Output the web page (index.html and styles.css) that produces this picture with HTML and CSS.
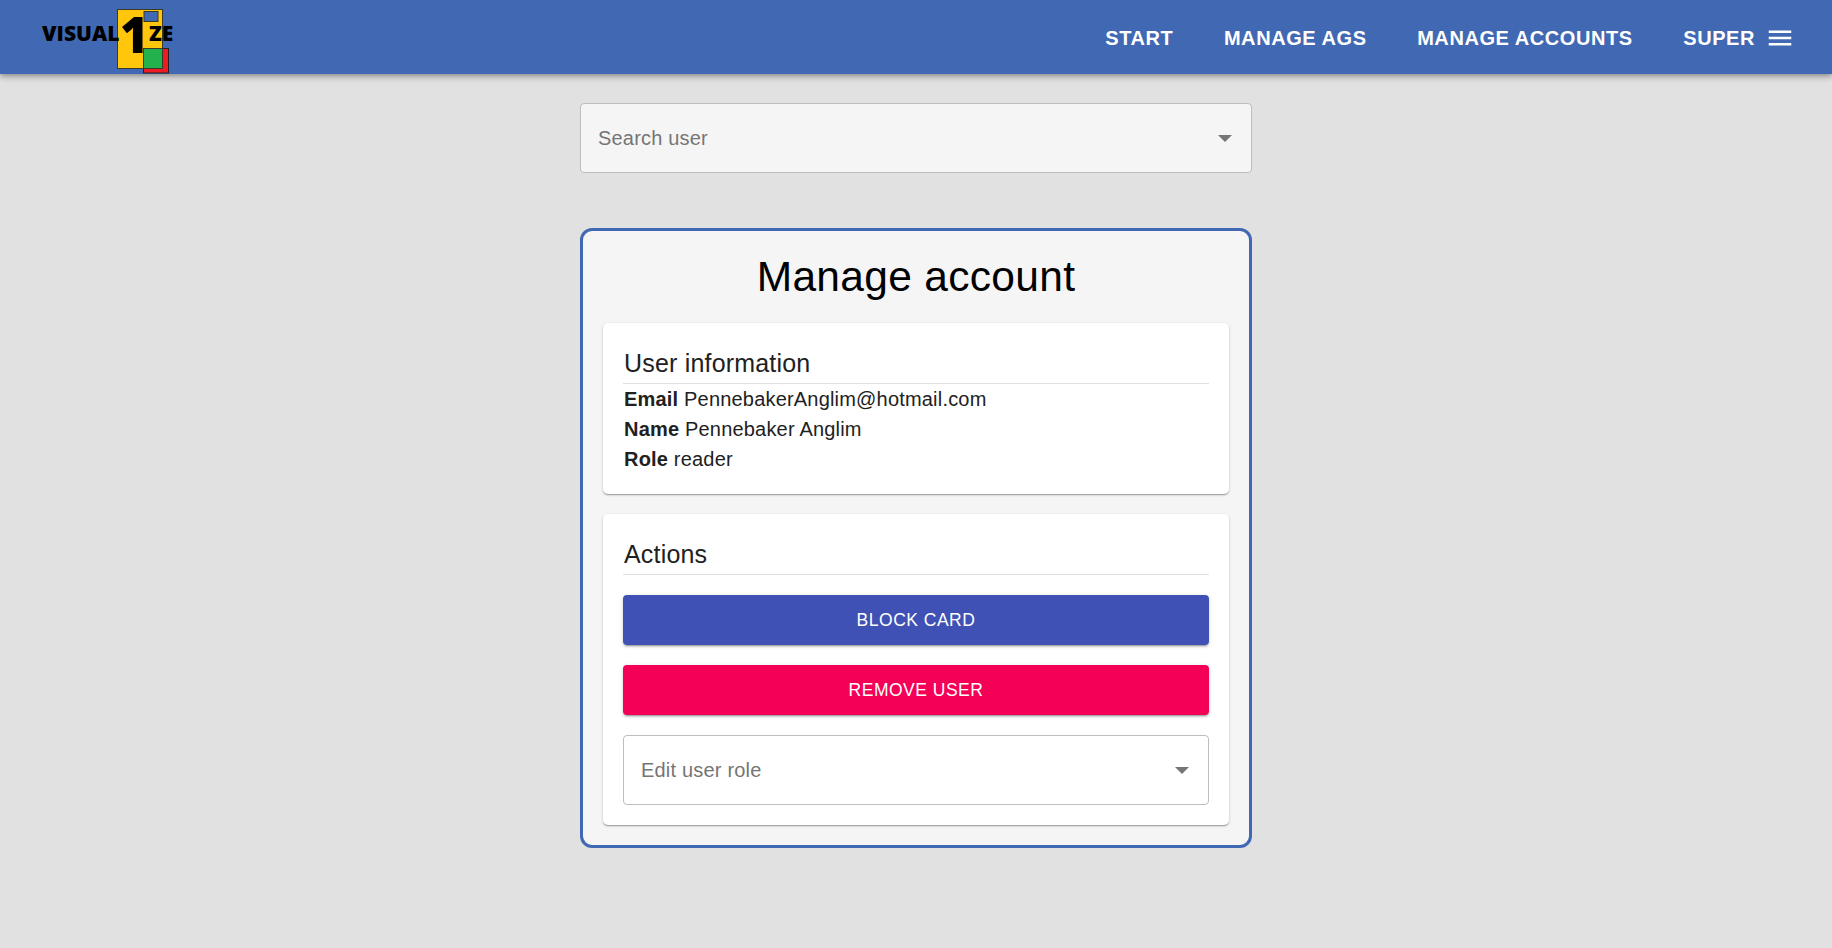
FILE: index.html
```html
<!DOCTYPE html>
<html lang="en">
<head>
<meta charset="utf-8">
<title>Manage account</title>
<link rel="stylesheet" href="styles.css">
</head>
<body>
<header class="appbar">
  <svg class="logo" width="136" height="74" viewBox="0 0 136 74">
    <rect x="75.5" y="9.5" width="45" height="59" fill="#ffc60b" stroke="#3a3a2a" stroke-width="1"/>
    <rect x="102" y="11.5" width="14" height="10" fill="#4168b2" stroke="#3a3a2a" stroke-width="1"/>
    <rect x="101.5" y="48.5" width="25" height="24.5" fill="#ed1c24" stroke="#222" stroke-width="1"/>
    <rect x="101.5" y="48.5" width="19" height="20" fill="#22b14c" stroke="#3a3a2a" stroke-width="1"/>
    <text class="logo-text" x="0" y="41">VISUAL</text>
    <text class="logo-one" x="78" y="53">1</text>
    <text class="logo-text" x="107" y="41">ZE</text>
  </svg>
  <nav class="nav">
    <a class="nav-link">START</a>
    <a class="nav-link">MANAGE AGS</a>
    <a class="nav-link">MANAGE ACCOUNTS</a>
    <a class="nav-link nav-user">SUPER
      <svg class="menu-icon" width="30" height="30" viewBox="0 0 24 24"><path d="M3 18h18v-2H3v2zm0-5h18v-2H3v2zm0-7v2h18V6H3z" fill="#fff"/></svg>
    </a>
  </nav>
</header>
<main class="page">
  <div class="select select-search">
    <span class="placeholder">Search user</span>
    <span class="caret"></span>
  </div>
  <section class="panel">
    <h1 class="panel-title">Manage account</h1>
    <div class="card">
      <h2 class="card-title">User information</h2>
      <p class="row"><b>Email</b> PennebakerAnglim@hotmail.com</p>
      <p class="row"><b>Name</b> Pennebaker Anglim</p>
      <p class="row"><b>Role</b> reader</p>
    </div>
    <div class="card card-actions">
      <h2 class="card-title">Actions</h2>
      <button class="btn btn-primary">BLOCK CARD</button>
      <button class="btn btn-danger">REMOVE USER</button>
      <div class="select select-role">
        <span class="placeholder">Edit user role</span>
        <span class="caret"></span>
      </div>
    </div>
  </section>
</main>
</body>
</html>
```
FILE: styles.css
```css
* { box-sizing: border-box; }
html, body { margin: 0; height: 100%; }
body {
  background: #e1e1e1;
  font-family: "Liberation Sans", Arial, sans-serif;
  color: #212121;
  overflow: hidden;
}
.appbar {
  height: 74px;
  background: #4168b2;
  box-shadow: 0 2px 4px -1px rgba(0,0,0,.2), 0 4px 5px 0 rgba(0,0,0,.14), 0 1px 10px 0 rgba(0,0,0,.12);
  display: flex;
  align-items: flex-start;
  justify-content: space-between;
  padding: 0 37px 0 42px;
  position: relative;
}
.logo { display: block; flex: none; }
.logo-text { font-family: "Open Sans", sans-serif; font-weight: 800; font-size: 21px; fill: #000; }
.logo-one { font-family: "Open Sans", sans-serif; font-weight: 800; font-size: 49px; fill: #000; }
.nav { display: flex; align-items: center; height: 74px; padding-top: 2px; gap: 50.5px; }
.nav-link {
  color: #fff;
  font-weight: 700;
  font-size: 20px;
  letter-spacing: .57px;
  display: flex;
  align-items: center;
  gap: 10px;
  line-height: 30px;
}
.page {
  width: 672px;
  margin: 29px auto 0;
}
.select {
  display: flex;
  align-items: center;
  justify-content: space-between;
  height: 70px;
  border: 1px solid #bdbdbd;
  border-radius: 4px;
  padding: 0 19px 0 17px;
  font-size: 20px;
  letter-spacing: .19px;
  color: #757575;
}
.select-search { background: #f5f5f5; }
.select-role { background: #fff; margin-top: 20px; }
.caret {
  width: 0;
  height: 0;
  border-left: 7px solid transparent;
  border-right: 7px solid transparent;
  border-top: 7px solid #757575;
}
.panel {
  margin-top: 55px;
  background: #f5f5f5;
  border: 3px solid #4168b2;
  border-radius: 12px;
  padding: 0 20px 20px;
}
.panel-title {
  margin: 0;
  height: 92px;
  line-height: 92px;
  text-align: center;
  font-weight: 400;
  font-size: 42.5px;
  letter-spacing: .31px;
  color: #000;
}
.card {
  background: #fff;
  border-radius: 5px;
  padding: 20px;
  box-shadow: 0 1px 3px rgba(0,0,0,.2), 0 1px 1px rgba(0,0,0,.14), 0 2px 1px -1px rgba(0,0,0,.12);
}
.card-actions { margin-top: 20px; }
.card-title {
  margin: 0;
  height: 41px;
  line-height: 41px;
  padding-left: 1px;
  font-weight: 400;
  font-size: 25px;
  letter-spacing: .19px;
  border-bottom: 1px solid #e0e0e0;
}
.row {
  margin: 0;
  padding-left: 1px;
  font-size: 20px;
  line-height: 30px;
  letter-spacing: .19px;
}
.btn {
  display: block;
  width: 100%;
  height: 50px;
  margin-top: 20px;
  border: 0;
  border-radius: 4px;
  color: #fff;
  font-family: inherit;
  font-size: 17.5px;
  letter-spacing: .5px;
  box-shadow: 0 3px 1px -2px rgba(0,0,0,.2), 0 2px 2px 0 rgba(0,0,0,.14), 0 1px 5px 0 rgba(0,0,0,.12);
}
.btn-primary { background: #3f51b5; }
.btn-danger { background: #f50057; }
```
